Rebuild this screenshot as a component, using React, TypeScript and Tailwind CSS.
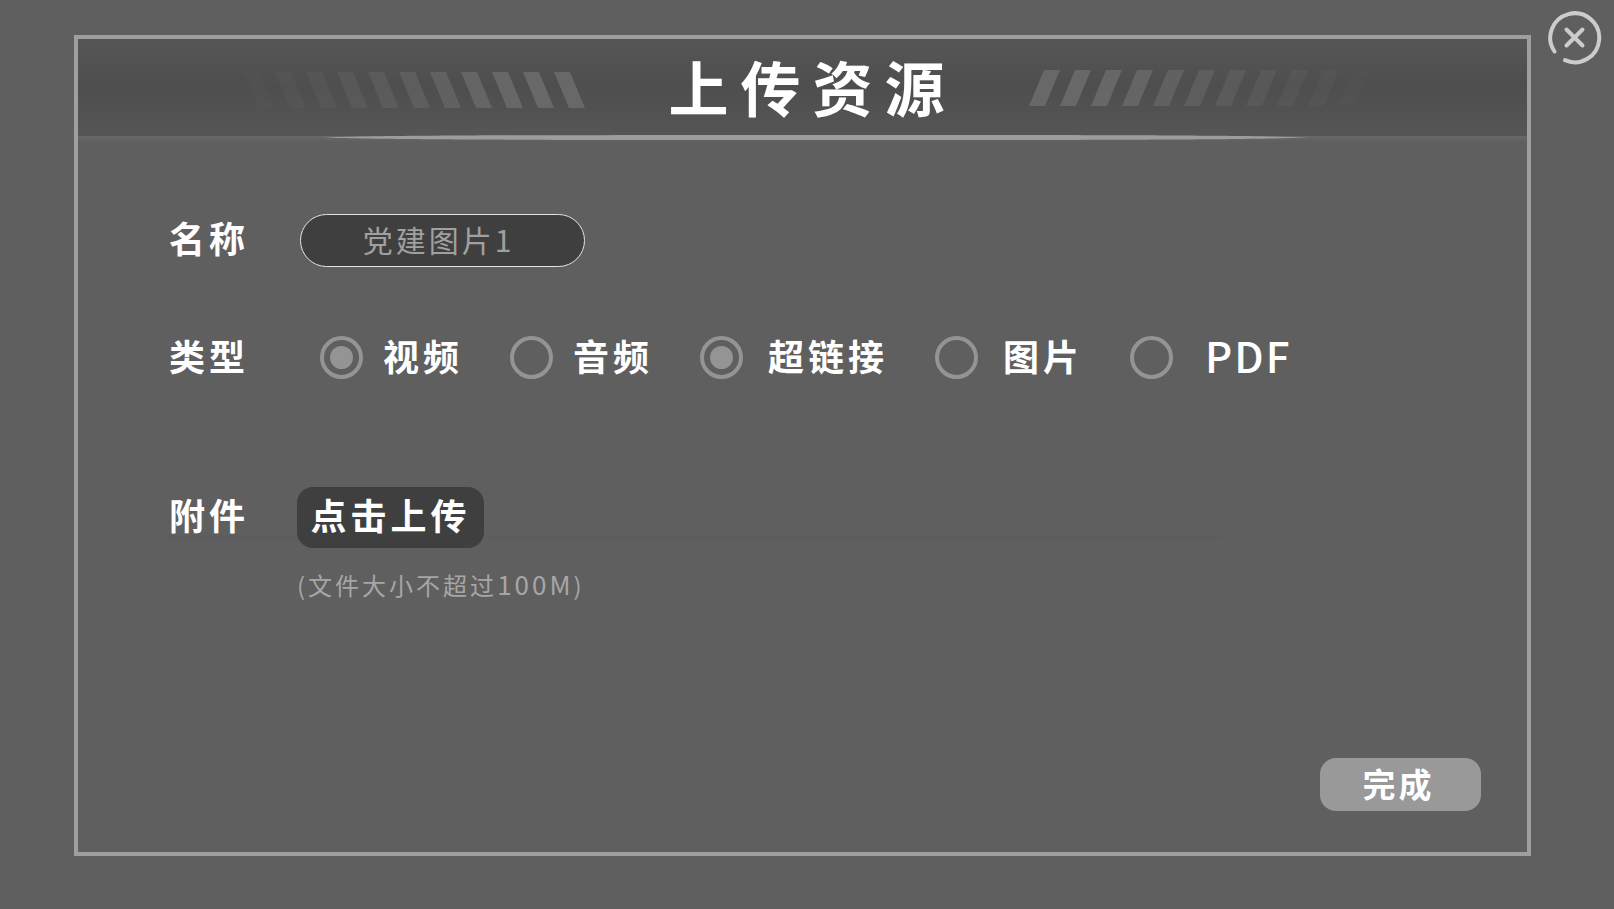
import { useState } from "react";

const kinds = [
  { id: "video", label: "视频", checked: true, gap: "gap-5" },
  { id: "audio", label: "音频", checked: false, gap: "gap-5" },
  { id: "link", label: "超链接", checked: true, gap: "gap-[25px]" },
  { id: "image", label: "图片", checked: false, gap: "gap-[25px]" },
  { id: "pdf", label: "PDF", checked: false, gap: "gap-8" },
];

const stripes = [0, 1, 2, 3, 4, 5, 6, 7, 8, 9, 10];
const fades = [1, 1, 0.95, 0.85, 0.72, 0.6, 0.48, 0.36, 0.26, 0.17, 0.1];

function LeftStripes() {
  return (
    <svg width="368" height="40" viewBox="0 0 368 40" className="shrink-0" aria-hidden="true">
      {stripes.map((i) => (
        <path key={i} d={`M${337 - i * 31} 4h16l15 36h-16z`} fill="#686868" opacity={fades[i]} />
      ))}
    </svg>
  );
}

function RightStripes() {
  return (
    <svg width="360" height="40" viewBox="0 0 360 40" className="shrink-0" aria-hidden="true">
      {stripes.map((i) => (
        <path key={i} d={`M${15 + i * 31} 2h16l-15 36h-16z`} fill="#686868" opacity={fades[i]} />
      ))}
    </svg>
  );
}

function TitleBar() {
  return (
    <header className="relative flex h-[97px] items-center justify-center gap-[72px] bg-linear-to-b from-[#565656] via-[#4e4e4e] to-[#565656]">
      <LeftStripes />
      <h1 className="shrink-0 pb-1 pl-3 text-[60px] leading-[88px] font-bold tracking-[12px] whitespace-nowrap">
        上传资源
      </h1>
      <RightStripes />
      <div className="absolute inset-x-0 top-full h-[6px] bg-linear-to-b from-[#696969] to-[#5f5f5f]" />
      <svg
        className="absolute -bottom-1 left-[17%] h-[5px] w-[68%]"
        viewBox="0 0 980 5"
        preserveAspectRatio="none"
        aria-hidden="true"
      >
        <path d="M0 2.5C60 .6 160 0 490 0S920 .6 980 2.5C920 4.4 820 5 490 5S60 4.4 0 2.5z" fill="#9d9d9d" />
      </svg>
    </header>
  );
}

export default function App() {
  const [name, setName] = useState("党建图片1");
  const [picked, setPicked] = useState<Record<string, boolean>>(
    Object.fromEntries(kinds.map((k) => [k.id, k.checked])),
  );

  return (
    <div className="flex min-h-screen items-stretch bg-[#5f5f5f] pl-[74px] font-['Noto_Sans_CJK_SC',sans-serif] text-white">
      <section className="mt-[35px] mb-[53px] flex flex-1 flex-col border-4 border-[#9f9f9f]">
        <TitleBar />
        <form className="flex flex-1 flex-col pt-[78px] pr-[46px] pb-[41px] pl-[91px]" onSubmit={(e) => e.preventDefault()}>
          <div className="flex items-center">
            <label htmlFor="name" className="w-[131px] pb-2 text-[36px] leading-[44px] font-bold tracking-[4px]">
              名称
            </label>
            <input
              id="name"
              value={name}
              onChange={(e) => setName(e.target.value)}
              className="h-[53px] w-[285px] rounded-full border border-[#e4e4e4] bg-[#3f3f3f] pr-5 pb-1 pl-3 text-center text-[30px] tracking-[3px] text-[#a0a0a0] outline-none"
            />
          </div>

          <fieldset className="mt-[64px] flex items-center">
            <legend className="float-left w-[151px] pb-1 text-[36px] leading-[48px] font-bold tracking-[4px]">类型</legend>
            <div className="flex items-center gap-[47px]">
              {kinds.map((k) => (
                <label
                  key={k.id}
                  className={`flex items-center text-[36px] leading-[48px] font-bold tracking-[4px] whitespace-nowrap ${k.gap}`}
                >
                  <input
                    type="checkbox"
                    checked={picked[k.id]}
                    onChange={() => setPicked({ ...picked, [k.id]: !picked[k.id] })}
                    className="size-[43px] shrink-0 appearance-none rounded-full border-4 border-[#949494] bg-clip-content p-[6px] checked:bg-[#949494]"
                  />
                  <span className={k.id === "pdf" ? "pb-1 text-[42px] font-medium tracking-[2px]" : "pb-1"}>{k.label}</span>
                </label>
              ))}
            </div>
          </fieldset>

          <div className="relative mt-[104px] flex items-center">
            <div className="absolute right-[260px] bottom-2 -left-1 h-[5px] bg-[#5c5d5f]" />
            <span id="attachment" className="relative w-[128px] pb-2 text-[36px] leading-[44px] font-bold tracking-[4px]">
              附件
            </span>
            <button
              type="button"
              aria-describedby="attachment"
              className="relative h-[61px] w-[187px] rounded-2xl bg-[#3f3f3f] pb-2 text-[36px] leading-[44px] font-bold tracking-[4px] whitespace-nowrap"
            >
              点击上传
            </button>
          </div>
          <p className="mt-[18px] ml-[128px] text-[24px] leading-9 tracking-[3px] text-[#a6a6a6]">
            (文件大小不超过<span className="text-[26px]">100M</span>)
          </p>

          <button
            type="submit"
            className="mt-auto h-[53px] w-[161px] self-end rounded-2xl bg-[#999999] pr-1 pb-1 text-[33px] leading-[48px] font-bold tracking-[3px]"
          >
            完成
          </button>
        </form>
      </section>

      <button type="button" aria-label="关闭" className="mr-[11px] ml-[15px] mt-[9px] size-[57px] shrink-0 self-start text-[#cccccc]">
        <svg viewBox="0 0 57 57" fill="none" stroke="currentColor" strokeWidth="4" strokeLinecap="round" aria-hidden="true">
          <path d="M8.5 42.5A24.5 24.5 0 1 1 19 51.2" />
          <path d="M20.5 20.5l16 16M36.5 20.5L20.5 36.5" />
        </svg>
      </button>
    </div>
  );
}
